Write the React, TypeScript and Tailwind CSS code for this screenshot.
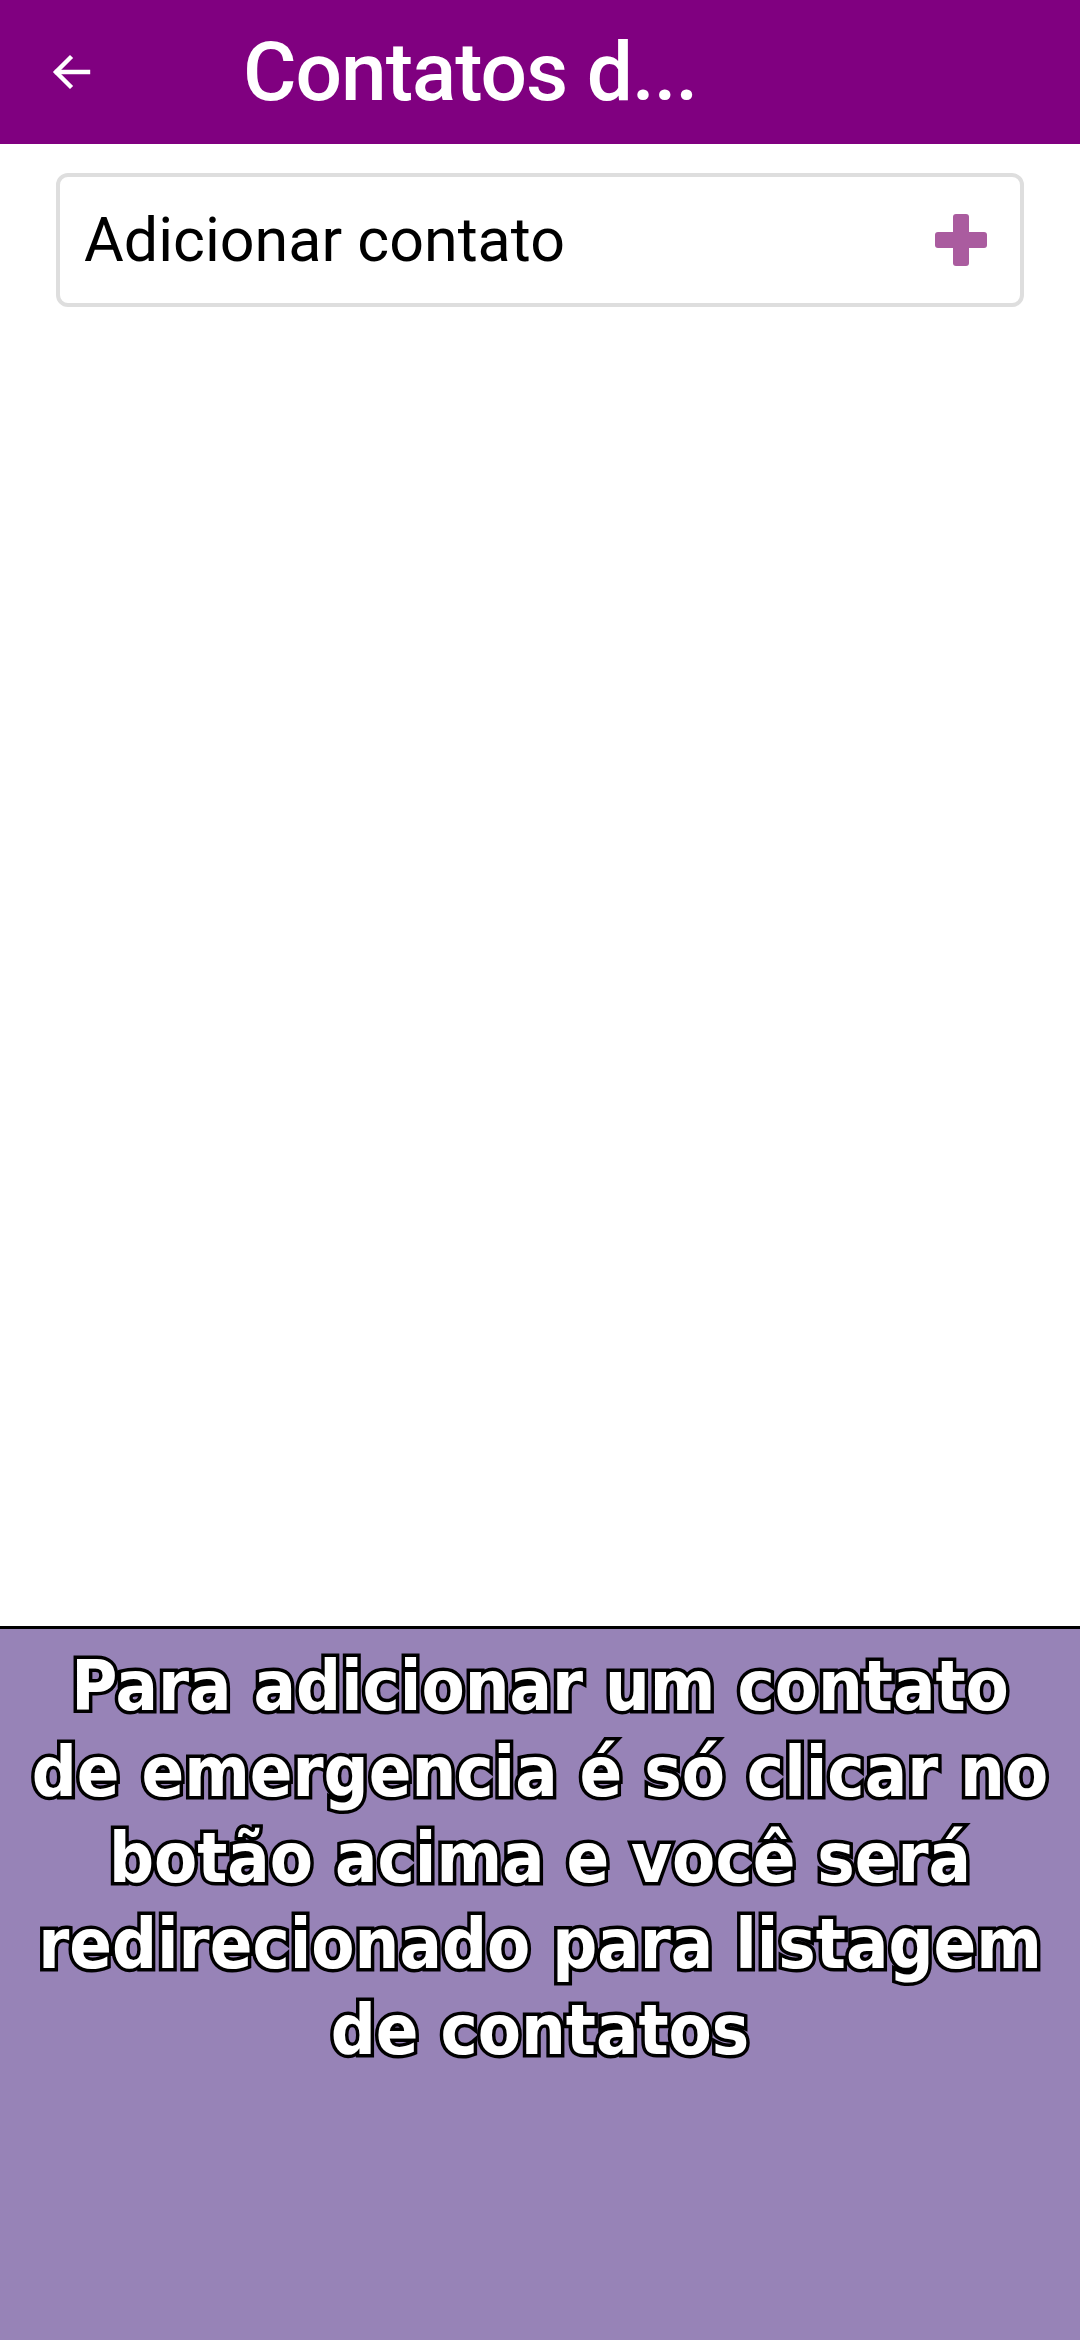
import React from "react";

export default function App() {
  return (
    <div className="w-[1080px] h-[2340px] flex flex-col bg-white overflow-hidden">
      <div className="h-[144px] bg-[#800080] flex items-center shrink-0">
        <div className="w-[243px] flex items-center pl-[48px]">
          <svg width="48" height="48" viewBox="0 0 24 24" fill="none" stroke="white" strokeWidth="2.2" strokeLinecap="square">
            <path d="M20 12H4.5" />
            <path d="M11 5L4 12l7 7" strokeLinejoin="miter" />
          </svg>
        </div>
        <div className="text-white font-medium text-[82px] leading-none font-['Roboto',sans-serif] tracking-[-1px]">Contatos d...</div>
      </div>
      <div className="px-[56px] pt-[29px]">
        <div className="h-[134px] border-[4px] border-[#dedede] rounded-[12px] flex items-center justify-between pl-[24px] pr-[33px]">
          <span className="text-[61px] text-black font-['Roboto',sans-serif] leading-none">Adicionar contato</span>
          <svg width="52" height="52" viewBox="0 0 52 52">
            <rect x="18" y="0" width="16" height="52" rx="3" fill="#aa5c9f" />
            <rect x="0" y="18" width="52" height="16" rx="3" fill="#aa5c9f" />
          </svg>
        </div>
      </div>
      <div className="flex-1" />
      <div className="h-[714px] shrink-0 border-t-[3px] border-black bg-[#9783b7] pt-[14px]">
        <p className="text-center text-white font-bold text-[70px] leading-[86px] font-['DejaVu_Sans_Condensed','DejaVu_Sans',sans-serif] [font-stretch:condensed] [paint-order:stroke_fill] [-webkit-text-stroke:7px_black] px-[22px]">
          Para adicionar um contato de emergencia é só clicar no botão acima e você será redirecionado para listagem de contatos
        </p>
      </div>
    </div>
  );
}
